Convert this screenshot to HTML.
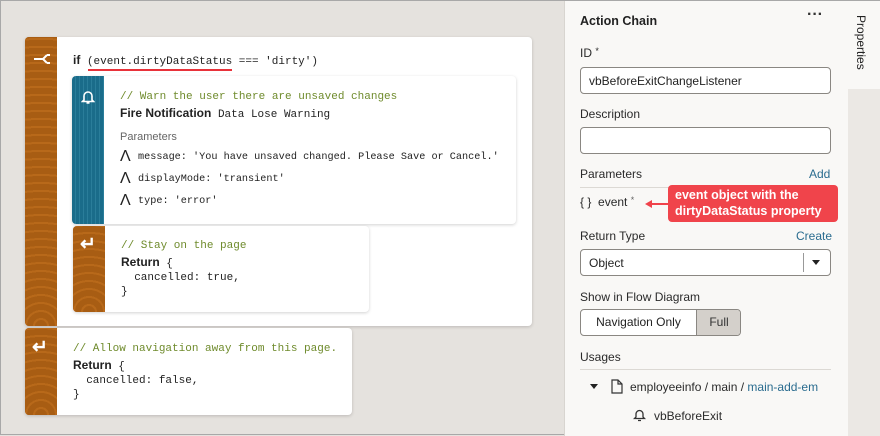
<!DOCTYPE html>
<html><head><style>
*{box-sizing:border-box;margin:0;padding:0}
body{width:880px;height:435px;overflow:hidden;background:#e5e2de;font-family:"Liberation Sans",sans-serif;position:relative;border:1px solid #a8a8a8}
.a{position:absolute}
.card{position:absolute;background:#fff;border-radius:4px;box-shadow:0 1px 3px rgba(0,0,0,.18);overflow:hidden}
.strip{position:absolute;left:0;top:0;bottom:0;width:32px;background:repeating-radial-gradient(circle at 50% 100%,#a85d13 0 6px,#b8691a 6px 8px);background-color:#ab5f14}
.teal{background:repeating-linear-gradient(90deg,#1a6c8a 0 3px,#2a7d9a 3px 4px)}
.mono{font-family:"Liberation Mono",monospace;font-size:11px;color:#222;white-space:nowrap}
.sm{font-size:10.2px}
.cm{color:#6f8b2c}
.b{font-family:"Liberation Sans",sans-serif;font-weight:bold;font-size:12px}
.ic{position:absolute;color:#fff;font-size:19px;left:7px}
.lbl{font-size:12px;color:#2a2a2a}
.inp{position:absolute;left:579px;width:251px;height:27px;border:1px solid #8a8782;border-radius:4px;background:#fff;font-size:12px;padding:6px 8px;color:#222}
.link{color:#2a6c8f}
.pr{position:absolute;left:48px;height:20px;line-height:20px}
.A{font-family:'Liberation Sans';font-size:16px;display:inline-block;width:18px;line-height:16px;vertical-align:-2px}
</style></head><body>
<div class="card" style="left:24px;top:36px;width:507px;height:289px">
 <div class="strip"></div>
 <svg class="a" style="left:8px;top:16px" width="18" height="12" viewBox="0 0 18 12"><path d="M1 6h9 M10 6l4-4 M10 6l4 4 M14 2h3 M14 10h3" fill="none" stroke="#fff" stroke-width="2"/></svg>
 <div class="a mono" style="left:48px;top:16px"><span class="b">if</span> (event.dirtyDataStatus === 'dirty')</div>
 <div class="a" style="left:63px;top:32px;width:144px;height:2px;background:#e8323a"></div>
</div>
<div class="card" style="left:71px;top:75px;width:444px;height:148px">
 <div class="strip teal"></div>
 <svg class="a" style="left:9px;top:13px" width="14" height="16" viewBox="0 0 14 16"><path d="M3 11V7a4 4 0 0 1 8 0v4l1.5 1.5h-11z M5.5 14h3" fill="none" stroke="#fff" stroke-width="1.6"/></svg>
 <div class="a mono cm" style="left:48px;top:15px">// Warn the user there are unsaved changes</div>
 <div class="a mono" style="left:48px;top:30px"><span class="b">Fire Notification</span> Data Lose Warning</div>
 <div class="a" style="left:48px;top:55px;font-size:11px;color:#666">Parameters</div>
 <div class="pr mono sm" style="top:72px"><span class="A">Λ</span>message: 'You have unsaved changed. Please Save or Cancel.'</div>
 <div class="pr mono sm" style="top:94px"><span class="A">Λ</span>displayMode: 'transient'</div>
 <div class="pr mono sm" style="top:116px"><span class="A">Λ</span>type: 'error'</div>
</div>
<div class="card" style="left:72px;top:225px;width:296px;height:86px">
 <div class="strip"></div>
 <div class="ic" style="top:7px;font-weight:bold">↵</div>
 <div class="a mono cm" style="left:48px;top:14px">// Stay on the page</div>
 <div class="a mono" style="left:48px;top:29px;line-height:14px"><span class="b">Return</span> {<br>&nbsp;&nbsp;cancelled: true,<br>}</div>
</div>
<div class="card" style="left:24px;top:327px;width:327px;height:87px">
 <div class="strip"></div>
 <div class="ic" style="top:8px;font-weight:bold">↵</div>
 <div class="a mono cm" style="left:48px;top:15px">// Allow navigation away from this page.</div>
 <div class="a mono" style="left:48px;top:30px;line-height:14px"><span class="b">Return</span> {<br>&nbsp;&nbsp;cancelled: false,<br>}</div>
</div>
<div class="a" style="left:563px;top:0;width:284px;height:435px;background:#f9f8f6;border-left:1px solid #d8d5d0"></div>
<div class="a" style="left:847px;top:0;width:33px;height:88px;background:#f9f8f6"></div>
<div class="a" style="left:847px;top:88px;width:33px;height:347px;background:#ebe8e4"></div>
<div class="a" style="left:853px;top:14px;writing-mode:vertical-rl;font-size:12px;color:#222">Properties</div>
<div class="a" style="left:579px;top:13px;font-size:12.5px;font-weight:bold;color:#222">Action Chain</div>
<div class="a" style="left:806px;top:5px;font-size:16px;font-weight:bold;color:#333">···</div>
<div class="a lbl" style="left:579px;top:45px">ID <span style="font-size:9px;vertical-align:top">*</span></div>
<div class="inp" style="top:66px">vbBeforeExitChangeListener</div>
<div class="a lbl" style="left:579px;top:106px">Description</div>
<div class="inp" style="top:126px"></div>
<div class="a lbl" style="left:579px;top:166px">Parameters</div>
<div class="a lbl link" style="left:808px;top:166px">Add</div>
<div class="a" style="left:579px;top:186px;width:251px;height:1px;background:#dcd9d4"></div>
<div class="a lbl" style="left:579px;top:194px">{ }&nbsp; event <span style="font-size:9px;vertical-align:top;color:#666">*</span></div>
<div class="a" style="left:651px;top:202px;width:18px;height:2px;background:#f0424a"></div>
<div class="a" style="left:644px;top:199px;width:0;height:0;border:4px solid transparent;border-right:7px solid #f0424a;border-left:0"></div>
<div class="a" style="left:667px;top:184px;width:170px;height:37px;background:#f0444b;border-radius:4px;color:#fff;font-weight:bold;font-size:12.5px;line-height:16px;padding:2px 7px">event object with the dirtyDataStatus property</div>
<div class="a lbl" style="left:579px;top:228px">Return Type</div>
<div class="a lbl link" style="left:795px;top:228px">Create</div>
<div class="inp" style="top:248px">Object</div>
<div class="a" style="left:802px;top:252px;width:1px;height:19px;background:#999"></div>
<div class="a" style="left:811px;top:259px;border:4px solid transparent;border-top:5px solid #222"></div>
<div class="a lbl" style="left:579px;top:289px">Show in Flow Diagram</div>
<div class="a" style="left:579px;top:308px;width:161px;height:27px;border:1px solid #8a8782;border-radius:4px;overflow:hidden;background:#fff">
 <div class="a" style="left:0;top:0;width:115px;height:25px;font-size:12px;text-align:center;line-height:25px;color:#222">Navigation Only</div>
 <div class="a" style="left:115px;top:0;width:45px;height:25px;background:#d4d0cb;border-left:1px solid #8a8782;font-size:12px;text-align:center;line-height:25px;color:#333">Full</div>
</div>
<div class="a lbl" style="left:579px;top:349px">Usages</div>
<div class="a" style="left:579px;top:368px;width:251px;height:1px;background:#dcd9d4"></div>
<div class="a" style="left:589px;top:383px;border:4px solid transparent;border-top:5px solid #222"></div>
<svg class="a" style="left:610px;top:378px" width="12" height="15" viewBox="0 0 12 15"><path d="M1 1h6l4 4v9H1z M7 1v4h4" fill="none" stroke="#333" stroke-width="1.2"/></svg>
<div class="a lbl" style="left:629px;top:379px">employeeinfo / main / <span class="link">main-add-em</span></div>
<svg class="a" style="left:632px;top:407px" width="13" height="14" viewBox="0 0 13 14"><path d="M3 9V6a3.5 3.5 0 0 1 7 0v3l1.5 1.5h-10z M5 12.5h3" fill="none" stroke="#333" stroke-width="1.3"/></svg>
<div class="a lbl" style="left:653px;top:408px">vbBeforeExit</div>
</body></html>
